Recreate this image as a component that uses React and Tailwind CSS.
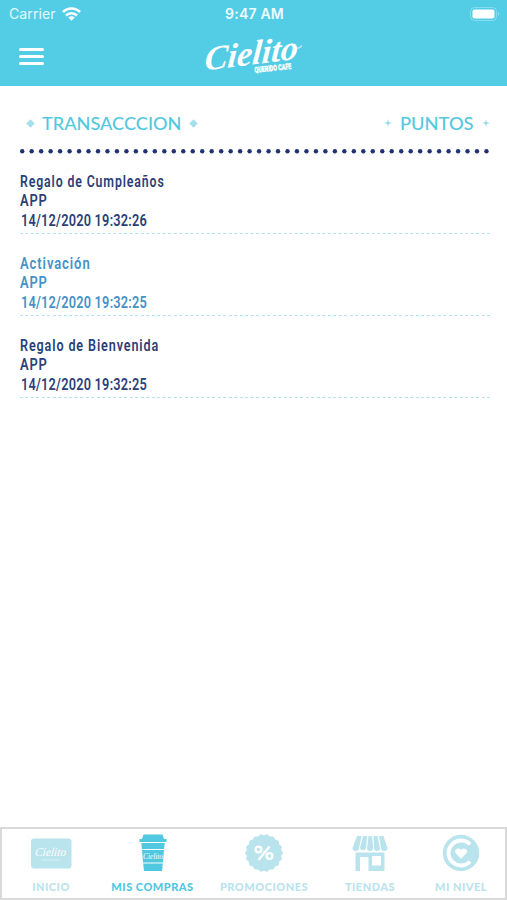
const ROWS = [
  { title: 'Regalo de Cumpleaños', date: '14/12/2020 19:32:26', color: 'text-[#2b3f78]', titleFit: 'scale-x-[0.725]' },
  { title: 'Activación', date: '14/12/2020 19:32:25', color: 'text-[#4592c6]', titleFit: 'scale-x-[0.765]' },
  { title: 'Regalo de Bienvenida', date: '14/12/2020 19:32:25', color: 'text-[#2b3f78]', titleFit: 'scale-x-[0.74]' },
];

function StatusBar() {
  return (
    <div className="grid h-7 grid-cols-3 items-center pl-[9px] pr-[7px] font-['Inter',sans-serif] text-[14px] leading-none">
      <div className="flex items-center gap-[6px] text-white/85">
        <span className="tracking-[0.1px]">Carrier</span>
        <svg width="19" height="15" viewBox="0 0 19 15" fill="none" stroke="#fff" strokeWidth="2.6">
          <path d="M1 5a12 12 0 0 1 17 0" />
          <path d="M4 8.500a7.8 7.8 0 0 1 11 0" />
          <path d="M9.5 13.700 6.3 10.500a4.6 4.6 0 0 1 6.4 0Z" fill="#fff" stroke="none" />
        </svg>
      </div>
      <span className="text-center font-semibold tracking-[0.2px] text-white/90">9:47 AM</span>
      <svg className="-mt-px justify-self-end" width="30" height="14" viewBox="0 0 30 14">
        <rect x="0.5" y="0.5" width="26" height="13" rx="4" fill="none" stroke="#fff" strokeOpacity="0.3" />
        <rect x="2.5" y="2.5" width="22" height="9" rx="2" fill="#fff" />
        <path d="M28 4.8q2 2.2 0 4.4z" fill="#fff" fillOpacity="0.45" />
      </svg>
    </div>
  );
}

function Logo() {
  return (
    <svg className="overflow-visible" width="104" height="44" viewBox="0 0 104 44" fill="#fff">
      <g transform="rotate(-7 50 22) skewX(-12)">
        <text x="7" y="30.500" textLength="94" lengthAdjust="spacingAndGlyphs" fontFamily="Liberation Serif, serif" fontStyle="italic" fontWeight="700" fontSize="34">
          Cielito
        </text>
      </g>
      <g transform="rotate(-6 50 22)">
        <text x="51" y="39" textLength="37" lengthAdjust="spacingAndGlyphs" fontFamily="Roboto, sans-serif" fontWeight="900" fontSize="8" stroke="#fff" strokeWidth="0.3">
          QUERIDO CAFE
        </text>
      </g>
      <path d="M94 14.500q3 .5 6-3" fill="none" stroke="#fff" strokeWidth="1.500" strokeOpacity="0.6" />
    </svg>
  );
}

function Diamond() {
  return (
    <svg width="9" height="9" viewBox="0 0 9 9" fill="#a5dfeb">
      <path d="M4.5 0.300 8.700 4.500 4.500 8.700 0.300 4.500Z" />
    </svg>
  );
}

function Sparkle() {
  return (
    <svg width="8" height="8" viewBox="0 0 8 8" fill="#84d5e8">
      <path d="M4 0 4.7 3.3 8 4 4.7 4.7 4 8 3.3 4.7 0 4 3.3 3.3Z" />
    </svg>
  );
}

function DotRule() {
  return (
    <svg className="mt-[15px]" width="470" height="6" viewBox="0 0 470 6">
      {Array.from({ length: 50 }, (_, i) => (
        <circle key={i} cx={2.2 + i * 9.475} cy="3.3" r="2.2" fill="#20336f" />
      ))}
    </svg>
  );
}

function Transaction({ row }) {
  return (
    <li className={`h-[82px] font-['Roboto',sans-serif] text-[17px] font-semibold leading-[19.4px] ${row.color}`}>
      <p className={`w-max origin-left tracking-[1.2px] ${row.titleFit}`}>{row.title}</p>
      <p className="w-max origin-left scale-x-[0.76] tracking-[1px]">APP</p>
      <p className="w-max origin-left translate-x-px scale-x-[0.75] tracking-[0.3px]">{row.date}</p>
      <div className="mt-[3px] h-px bg-[repeating-linear-gradient(90deg,#b4e4ec_0_3px,transparent_3px_5.5px)]" />
    </li>
  );
}

function CardIcon() {
  return (
    <svg width="42" height="38" viewBox="0 0 42 38">
      <rect x="1" y="4.500" width="40.500" height="30" rx="3" fill="#b9e3ed" />
      <text x="7" y="22.500" transform="skewX(-6)" textLength="31" lengthAdjust="spacingAndGlyphs" fontFamily="Liberation Serif, serif" fontStyle="italic" fontSize="12" fill="#fff">
        Cielito
      </text>
      <path d="M11 26H30" stroke="#fff" strokeOpacity="0.6" strokeWidth="0.8" />
    </svg>
  );
}

function CupIcon() {
  return (
    <svg width="28" height="38" viewBox="0 0 28 38" fill="#4fc8e0">
      <path d="M4.500 0.500h19l1.500 4.500h2.500v3H.5V5H3z" />
      <path d="M2.300 9h23.400l-.6 6H2.900zM3 16h22l-1 12.500H4zM4.200 29.500h19.600L23 37H5z" />
      <text x="4" y="24.500" textLength="20" lengthAdjust="spacingAndGlyphs" fontFamily="Liberation Serif, serif" fontStyle="italic" fontSize="8.500" fill="#fff">
        Cielito
      </text>
    </svg>
  );
}

// Scalloped outline, one point every 10 degrees
const SEAL = Array.from({ length: 36 }, (_, i) => {
  const r = i % 2 ? 17 : 18.5;
  const a = (i * Math.PI) / 18;
  return `${19 + r * Math.cos(a)},${19 + r * Math.sin(a)}`;
}).join(' ');

function PromoIcon() {
  return (
    <svg width="38" height="38" viewBox="0 0 38 38">
      <polygon points={SEAL} fill="#b9e3ed" stroke="#b9e3ed" strokeLinejoin="round" />
      <g fill="none" stroke="#fff" strokeWidth="2.400">
        <circle cx="13.500" cy="15.500" r="2.900" />
        <circle cx="24.500" cy="22" r="2.900" />
        <path d="M24.500 12.500 13.500 26" />
      </g>
    </svg>
  );
}

function StoreIcon() {
  return (
    <svg width="38" height="38" viewBox="0 0 36 38" fill="#b9e3ed">
      <path d="M5 2h4.500L7 14a3.200 3 0 0 1-6.500 0zM11 2h4.200L14 14a3.100 3 0 0 1-6 0zM16.500 2h3.600l1 12a3 3 0 0 1-6 0zM21.500 2h4L28 14a3 3 0 0 1-6 0zM27 2h4.500L35.500 14a3.200 3 0 0 1-6.500 0z" />
      <path fillRule="evenodd" d="M3.500 18.500h29V37H16.500V23H8v14H3.500zM20 22v9.500h9V22z" />
    </svg>
  );
}

function LevelIcon() {
  return (
    <svg width="38" height="38" viewBox="0 0 38 38">
      <circle cx="19" cy="19" r="18.200" fill="#b9e3ed" />
      <path d="M28 10.500a12.400 12.400 0 1 0 0 17" fill="none" stroke="#fff" strokeWidth="4" />
      <path d="M19 24.800 13.800 19.500q-2-3.700 1.200-4.800 2.500-.6 4 1.300 1.500-1.900 4-1.300 3.200 1.100 1.200 4.800z" fill="#fff" />
    </svg>
  );
}

const TABS = [
  { label: 'INICIO', Icon: CardIcon, width: 'w-[102px]' },
  { label: 'MIS COMPRAS', Icon: CupIcon, width: 'w-[101px]', active: true },
  { label: 'PROMOCIONES', Icon: PromoIcon, width: 'w-[122px]' },
  { label: 'TIENDAS', Icon: StoreIcon, width: 'w-[90px]' },
  { label: 'MI NIVEL', Icon: LevelIcon, width: 'w-[92px]' },
];

function TabBar() {
  return (
    <nav className="h-[73px] border-2 border-[#dadada] bg-white">
      <div className="-mx-[2px] flex pt-[5px]">
        {TABS.map(({ label, Icon, width, active }) => (
          <div key={label} className={`flex shrink-0 flex-col items-center ${width}`}>
            <Icon />
            <span
              className={`mt-[9px] whitespace-nowrap font-['Lato',sans-serif] text-[11px] font-black leading-[12px] tracking-[0.5px] ${active ? 'text-[#4fc8e0]' : 'text-[#b9e3ed]'}`}
            >
              {label}
            </span>
          </div>
        ))}
      </div>
    </nav>
  );
}

export default function App() {
  return (
    <div className="flex h-[900px] w-[507px] flex-col overflow-hidden bg-white">
      <header className="h-[86px] bg-[#53cde6]">
        <StatusBar />
        <div className="grid h-[56px] grid-cols-[1fr_auto_1fr] items-center pl-[19px] pr-[19px]">
          <div className="flex w-[25px] flex-col gap-[4px]">
            <span className="h-[3px] rounded-sm bg-white" />
            <span className="h-[3px] rounded-sm bg-white" />
            <span className="h-[3px] rounded-sm bg-white" />
          </div>
          <Logo />
        </div>
      </header>

      <main className="flex-1 pl-5 pr-[17px] pt-[27px]">
        <div className="flex h-[20px] items-center justify-between pl-[6px] font-['Lato',sans-serif] text-[16.5px] font-medium leading-5 text-[#53c8e0]">
          <div className="flex items-center">
            <Diamond />
            <span className="ml-[7px] mt-px w-[147px] origin-left scale-x-[1.1] whitespace-nowrap">TRANSACCCION</span>
            <Diamond />
          </div>
          <div className="flex items-center">
            <Sparkle />
            <span className="ml-[8px] mt-px w-[82px] origin-left scale-x-[1.11] whitespace-nowrap">PUNTOS</span>
            <Sparkle />
          </div>
        </div>
        <DotRule />
        <ul className="mt-[18px]">
          {ROWS.map((row) => (
            <Transaction key={row.title} row={row} />
          ))}
        </ul>
      </main>

      <TabBar />
    </div>
  );
}
